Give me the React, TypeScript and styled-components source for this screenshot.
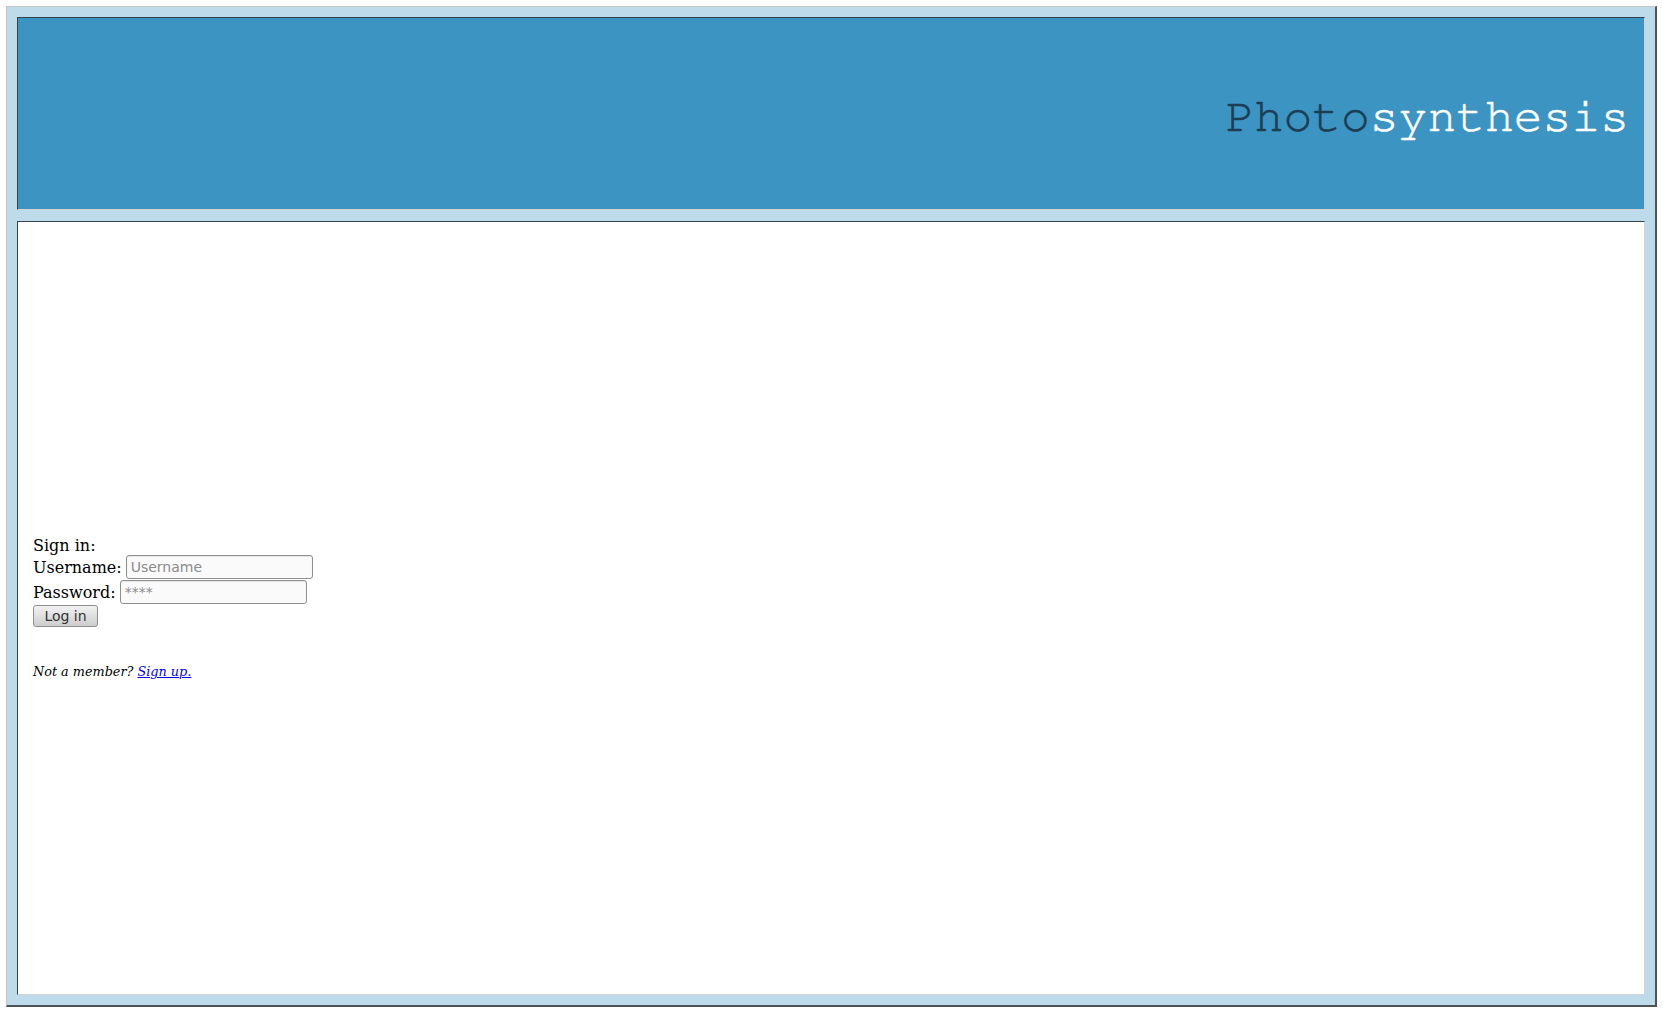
import React from "react";
import styled, { createGlobalStyle } from "styled-components";

const GlobalStyle = createGlobalStyle`
  html, body { margin: 0; padding: 0; background: #ffffff; }
  body { font-family: "DejaVu Serif", serif; }
  * { box-sizing: border-box; }
`;

const Frame = styled.div`
  margin: 6px;
  height: 1001px;
  display: flex;
  flex-direction: column;
  gap: 11px;
  padding: 10px;
  background: #bddbeb;
  border-style: solid;
  border-width: 1px 2px 2px 1px;
  border-color: #c6c6c6 #4f5356 #4f5356 #c6c6c6;
`;

const Header = styled.header`
  height: 193px;
  flex: none;
  background: #3c94c3;
  border-style: solid;
  border-width: 1px;
  border-color: #34444f #d2d2d2 #d2d2d2 #34444f;
  display: flex;
  justify-content: flex-end;
  padding: 72px 15px 0 0;
`;

const Title = styled.h1`
  margin: 0;
  font-family: "Nimbus Mono PS", "Nimbus Mono L", "FreeMono", "Courier 10 Pitch", "Courier New", monospace;
  font-weight: normal;
  font-size: 48px;
  line-height: 54px;
  color: #ffffff;
  -webkit-text-stroke: 0.6px currentColor;
`;

const Dark = styled.span`
  color: #1c3d52;
`;

const Main = styled.main`
  flex: 1;
  background: #ffffff;
  border-style: solid;
  border-width: 1px;
  border-color: #34444f #d2d2d2 #d2d2d2 #34444f;
  padding: 314px 15px 0 15px;
  font-size: 16px;
  color: #000;
`;

const SignInTitle = styled.div`
  line-height: 19px;
`;

const FieldRow = styled.label`
  display: flex;
  align-items: center;
  height: 25px;
  padding-bottom: 1px;
  gap: 4px;
  line-height: 19px;
`;

const TextInput = styled.input`
  width: 187px;
  height: 24px;
  padding: 1px 4px;
  border: 1px solid #8e8e8e;
  border-radius: 3px;
  background: #fafafa;
  box-shadow: inset 0 1px 1px rgba(0, 0, 0, 0.08);
  font-family: "DejaVu Sans", sans-serif;
  font-size: 14px;
  color: #222;
  outline: none;
  &::placeholder { color: #8c8c8c; }
`;

const LoginButton = styled.button`
  display: block;
  width: 65px;
  height: 22px;
  padding: 0;
  border: 1px solid #8f8f8f;
  border-radius: 3px;
  background: linear-gradient(#f2f2f2, #cdcdcd);
  font-family: "DejaVu Sans", sans-serif;
  font-size: 14px;
  color: #333;
`;

const Note = styled.p`
  margin: 37px 0 0 0;
  font-size: 12.8px;
  font-style: italic;
  line-height: 15px;
`;

const SignUpLink = styled.a`
  color: #0000ee;
  text-decoration: underline;
`;

export default function App() {
  return (
    <>
      <GlobalStyle />
      <Frame>
        <Header>
          <Title>
            <Dark>Photo</Dark>synthesis
          </Title>
        </Header>
        <Main>
          <SignInTitle>Sign in:</SignInTitle>
          <FieldRow>
            Username:
            <TextInput type="text" placeholder="Username" />
          </FieldRow>
          <FieldRow>
            Password:
            <TextInput type="password" placeholder="****" />
          </FieldRow>
          <LoginButton type="button">Log in</LoginButton>
          <Note>
            Not a member? <SignUpLink href="#">Sign up.</SignUpLink>
          </Note>
        </Main>
      </Frame>
    </>
  );
}
